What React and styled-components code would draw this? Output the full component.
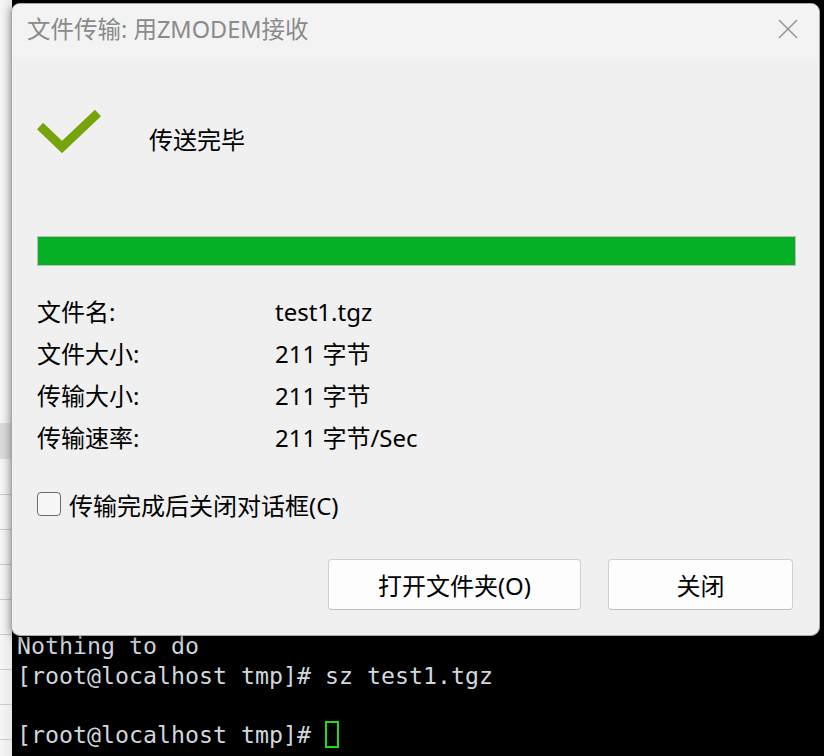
import React from "react";
import styled, { createGlobalStyle } from "styled-components";

const Global = createGlobalStyle`
  html, body { margin: 0; padding: 0; }
  body { width: 824px; height: 756px; overflow: hidden; background: #111; }
  #root { width: 824px; height: 756px; }
`;

const uiFont = `"Noto Sans", "Noto Sans CJK SC", sans-serif`;

const Desktop = styled.div`
  position: relative;
  width: 824px;
  height: 756px;
  display: flex;
  background: #1c1c1c;
  overflow: hidden;
`;

const SideSheet = styled.div`
  width: 12px;
  flex: none;
  background:
    linear-gradient(#d9d9d9, #d9d9d9) 0 423px / 100% 36px no-repeat,
    repeating-linear-gradient(
      to bottom,
      transparent 0,
      transparent 34px,
      #c3cad6 34px,
      #c3cad6 35px
    ) 0 460px / 100% 100% no-repeat,
    linear-gradient(to right, #f6f6f6, #e8e8e8);
`;

const Terminal = styled.div`
  flex: 1;
  background: #000;
  display: flex;
  flex-direction: column;
  justify-content: flex-end;
  padding: 0 0 7px 5px;
  font-family: "DejaVu Sans Mono", monospace;
  font-size: 23.25px;
  line-height: 29.5px;
  color: #d0d7de;
  white-space: pre;
`;

const TermLine = styled.div`
  height: 29.5px;
  display: flex;
  align-items: center;
`;

const Cursor = styled.span`
  display: inline-block;
  width: 10px;
  height: 23px;
  border: 2px solid #1fdc1f;
`;

const Dialog = styled.div`
  position: absolute;
  left: 11px;
  top: 3px;
  width: 809px;
  height: 633px;
  box-sizing: border-box;
  background: #f0f0f0;
  border: 1px solid #a8a8a8;
  border-radius: 9px;
  box-shadow: 0 2px 8px rgba(0, 0, 0, 0.45);
  display: flex;
  flex-direction: column;
  overflow: hidden;
  font-family: ${uiFont};
  color: #000;
`;

const TitleBar = styled.div`
  height: 53px;
  flex: none;
  box-sizing: border-box;
  background: #f3f3f3;
  display: flex;
  align-items: center;
  justify-content: space-between;
  padding: 0 21px 4px 15px;
`;

const Title = styled.div`
  font-size: 23.5px;
  line-height: 30px;
  color: #8a8a8a;
`;

const CloseIcon = styled.svg`
  width: 20px;
  height: 20px;
  display: block;
`;

const Body = styled.div`
  flex: 1;
  display: flex;
  flex-direction: column;
  padding: 0 23px 0 25px;
`;

const StatusRow = styled.div`
  margin-top: 52px;
  height: 44px;
  display: flex;
  align-items: flex-start;
`;

const CheckMark = styled.svg`
  width: 64px;
  height: 44px;
  flex: none;
  display: block;
`;

const StatusText = styled.div`
  margin-left: 48px;
  padding-top: 16px;
  font-size: 24px;
  line-height: 30px;
`;

const Progress = styled.div`
  margin-top: 83px;
  height: 30px;
  box-sizing: border-box;
  border: 1px solid #bcbcbc;
  background: #e6e6e6;
`;

const ProgressFill = styled.div`
  height: 100%;
  background: #06b025;
`;

const InfoGrid = styled.div`
  margin-top: 25px;
  display: grid;
  grid-template-columns: 238px 1fr;
  grid-auto-rows: 42px;
  align-items: center;
  font-size: 24px;
  line-height: 42px;
`;

const CheckRow = styled.label`
  margin-top: 32px;
  height: 26px;
  display: flex;
  align-items: center;
  gap: 8px;
  font-size: 24px;
`;

const Box = styled.span`
  width: 24px;
  height: 24px;
  box-sizing: border-box;
  border: 1.5px solid #6a6a6a;
  border-radius: 4px;
  background: #f7f7f7;
  flex: none;
`;

const Buttons = styled.div`
  margin-top: 42px;
  display: flex;
  justify-content: flex-end;
  gap: 27px;
  padding-right: 3px;
`;

const Button = styled.button`
  width: ${(p) => p.$w}px;
  height: 51px;
  box-sizing: border-box;
  background: #fdfdfd;
  border: 1px solid #cfcfcf;
  border-bottom-color: #c2c2c2;
  border-radius: 4px;
  font-family: ${uiFont};
  font-size: 24px;
  color: #000;
  padding: 0;
`;

const rows = [
  ["文件名:", "test1.tgz"],
  ["文件大小:", "211 字节"],
  ["传输大小:", "211 字节"],
  ["传输速率:", "211 字节/Sec"],
];

export default function App() {
  return (
    <>
      <Global />
      <Desktop>
        <SideSheet />
        <Terminal>
          <TermLine>Nothing to do</TermLine>
          <TermLine>[root@localhost tmp]# sz test1.tgz</TermLine>
          <TermLine> </TermLine>
          <TermLine>
            [root@localhost tmp]# <Cursor />
          </TermLine>
        </Terminal>
        <Dialog>
          <TitleBar>
            <Title>文件传输: 用ZMODEM接收</Title>
            <CloseIcon viewBox="0 0 20 20">
              <path d="M1 1L19 19M19 1L1 19" stroke="#8e8e8e" strokeWidth="1.4" fill="none" />
            </CloseIcon>
          </TitleBar>
          <Body>
            <StatusRow>
              <CheckMark viewBox="0 0 64 44">
                <polyline
                  points="3,17 25,38 61,4"
                  fill="none"
                  stroke="#77a40b"
                  strokeWidth="9"
                  strokeLinejoin="miter"
                />
              </CheckMark>
              <StatusText>传送完毕</StatusText>
            </StatusRow>
            <Progress>
              <ProgressFill style={{ width: "100%" }} />
            </Progress>
            <InfoGrid>
              {rows.map(([k, v]) => (
                <React.Fragment key={k}>
                  <div>{k}</div>
                  <div>{v}</div>
                </React.Fragment>
              ))}
            </InfoGrid>
            <CheckRow>
              <Box />
              传输完成后关闭对话框(C)
            </CheckRow>
            <Buttons>
              <Button $w={253}>打开文件夹(O)</Button>
              <Button $w={185}>关闭</Button>
            </Buttons>
          </Body>
        </Dialog>
      </Desktop>
    </>
  );
}
